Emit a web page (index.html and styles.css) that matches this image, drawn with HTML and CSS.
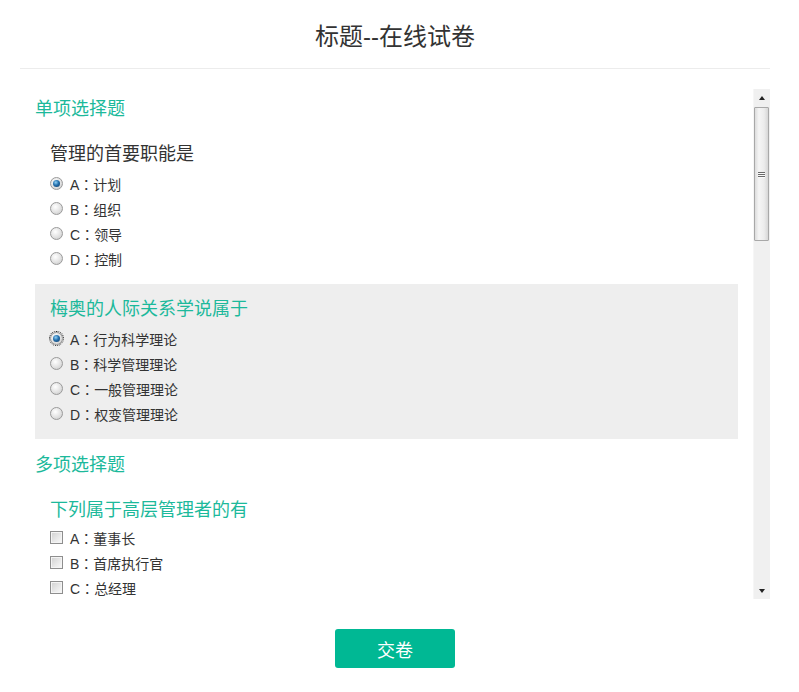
FILE: index.html
```html
<!DOCTYPE html>
<html lang="zh-CN">
<head>
<meta charset="utf-8">
<title>在线试卷</title>
<link rel="stylesheet" href="styles.css">
</head>
<body>
<div class="page">
  <header class="header">
    <h1 class="title">标题--在线试卷</h1>
  </header>

  <div class="panel">
    <div class="content">
      <div class="section-title">单项选择题</div>

      <div class="question">
        <div class="q-title">管理的首要职能是</div>
        <label class="option"><span class="radio checked"></span><span>A<span class="colon" lang="ja">：</span>计划</span></label>
        <label class="option"><span class="radio"></span><span>B<span class="colon" lang="ja">：</span>组织</span></label>
        <label class="option"><span class="radio"></span><span>C<span class="colon" lang="ja">：</span>领导</span></label>
        <label class="option"><span class="radio"></span><span>D<span class="colon" lang="ja">：</span>控制</span></label>
      </div>

      <div class="question active">
        <div class="q-title teal">梅奥的人际关系学说属于</div>
        <label class="option"><span class="radio checked focused"></span><span>A<span class="colon" lang="ja">：</span>行为科学理论</span></label>
        <label class="option"><span class="radio"></span><span>B<span class="colon" lang="ja">：</span>科学管理理论</span></label>
        <label class="option"><span class="radio"></span><span>C<span class="colon" lang="ja">：</span>一般管理理论</span></label>
        <label class="option"><span class="radio"></span><span>D<span class="colon" lang="ja">：</span>权变管理理论</span></label>
      </div>

      <div class="section-title spaced">多项选择题</div>

      <div class="question multi">
        <div class="q-title teal">下列属于高层管理者的有</div>
        <label class="option"><span class="checkbox"></span><span>A<span class="colon" lang="ja">：</span>董事长</span></label>
        <label class="option"><span class="checkbox"></span><span>B<span class="colon" lang="ja">：</span>首席执行官</span></label>
        <label class="option"><span class="checkbox"></span><span>C<span class="colon" lang="ja">：</span>总经理</span></label>
      </div>
    </div>

    <div class="scrollbar">
      <div class="sb-btn"><span class="arrow-up"></span></div>
      <div class="sb-track">
        <div class="sb-thumb">
          <span class="grip"></span>
          <span class="grip"></span>
          <span class="grip"></span>
        </div>
      </div>
      <div class="sb-btn"><span class="arrow-down"></span></div>
    </div>
  </div>

  <div class="actions">
    <button class="submit" type="button">交卷</button>
  </div>
</div>
</body>
</html>
```

FILE: styles.css
```css
* { box-sizing: border-box; }

html, body {
  margin: 0;
  padding: 0;
  background: #fff;
}

body {
  font-family: "Liberation Sans", "Noto Sans CJK SC", sans-serif;
  color: #333;
}

.page {
  width: 799px;
  height: 692px;
  padding: 0 29px 0 20px;
}

.header {
  border-bottom: 1px solid #ececec;
  padding-top: 6px;
  height: 69px;
}

.title {
  margin: 0;
  text-align: center;
  font-size: 24px;
  font-weight: normal;
  line-height: 62px;
  color: #333;
}

.panel {
  margin-top: 20px;
  height: 510px;
  display: flex;
}

.content {
  flex: 1;
  overflow: hidden;
  padding: 0 15px;
}

.section-title {
  height: 40px;
  line-height: 40px;
  font-size: 18px;
  color: #1cb99b;
}

.section-title.spaced {
  margin-top: 6px;
}

.question {
  padding: 10px 15px 13px;
}

.question.active {
  background: #eeeeee;
}

.q-title {
  font-size: 18px;
  line-height: 30px;
  margin-bottom: 2px;
  color: #333;
}

.question.multi .q-title {
  margin-bottom: 0;
}

.q-title.teal {
  color: #1cb99b;
}

.option {
  display: flex;
  align-items: center;
  height: 25px;
  font-size: 14px;
  color: #333;
}

.colon {
  font-family: "Noto Sans CJK JP", "Noto Sans CJK SC", sans-serif;
}

.radio {
  position: relative;
  width: 13px;
  height: 13px;
  margin-right: 7px;
  border-radius: 50%;
  border: 1px solid #9a9a9a;
  background: radial-gradient(circle at 40% 35%, #ffffff 0%, #e2e2e2 55%, #c4c4c4 100%);
  flex: none;
}

.radio.checked::after {
  content: "";
  position: absolute;
  left: 2px;
  top: 2px;
  width: 7px;
  height: 7px;
  border-radius: 50%;
  background: radial-gradient(circle at 40% 35%, #8fd0f5 0%, #2470ad 45%, #0f3660 100%);
}

.radio.focused {
  outline: 1px dotted #222;
  outline-offset: 0;
}

.checkbox {
  width: 13px;
  height: 13px;
  margin-right: 7px;
  border: 1px solid #8e8e8e;
  background: linear-gradient(135deg, #d0d0d0 0%, #e8e8e8 55%, #fafafa 100%);
  box-shadow: inset 0 0 0 1px #f4f4f4;
  flex: none;
}

.scrollbar {
  width: 17px;
  flex: none;
  display: flex;
  flex-direction: column;
  background: #f0f0f0;
  border-left: 1px solid #f6f6f6;
}

.sb-btn {
  height: 17px;
  display: flex;
  align-items: center;
  justify-content: center;
  flex: none;
}

.arrow-up {
  width: 0;
  height: 0;
  border-left: 3.5px solid transparent;
  border-right: 3.5px solid transparent;
  border-bottom: 4px solid #222;
}

.arrow-down {
  width: 0;
  height: 0;
  border-left: 3.5px solid transparent;
  border-right: 3.5px solid transparent;
  border-top: 4px solid #222;
}

.sb-track {
  flex: 1;
  padding: 1px 0 0 0;
}

.sb-thumb {
  height: 134px;
  margin: 0 1px 0 0;
  border: 1px solid #a8a8a8;
  border-radius: 1px;
  background: linear-gradient(90deg, #dcdcdc 0%, #f5f5f5 30%, #ececec 70%, #d6d6d6 100%);
  display: flex;
  flex-direction: column;
  justify-content: center;
  align-items: center;
  gap: 1px;
}

.grip {
  width: 7px;
  height: 1px;
  background: #6a6a6a;
  box-shadow: 0 1px 0 #fafafa;
}

.actions {
  display: flex;
  justify-content: center;
  padding-top: 30px;
}

.submit {
  width: 120px;
  height: 39px;
  border: none;
  border-radius: 3px;
  background: #00b894;
  color: #fff;
  font-family: "Liberation Sans", "Noto Sans CJK SC", sans-serif;
  font-size: 18px;
  cursor: pointer;
}
```
